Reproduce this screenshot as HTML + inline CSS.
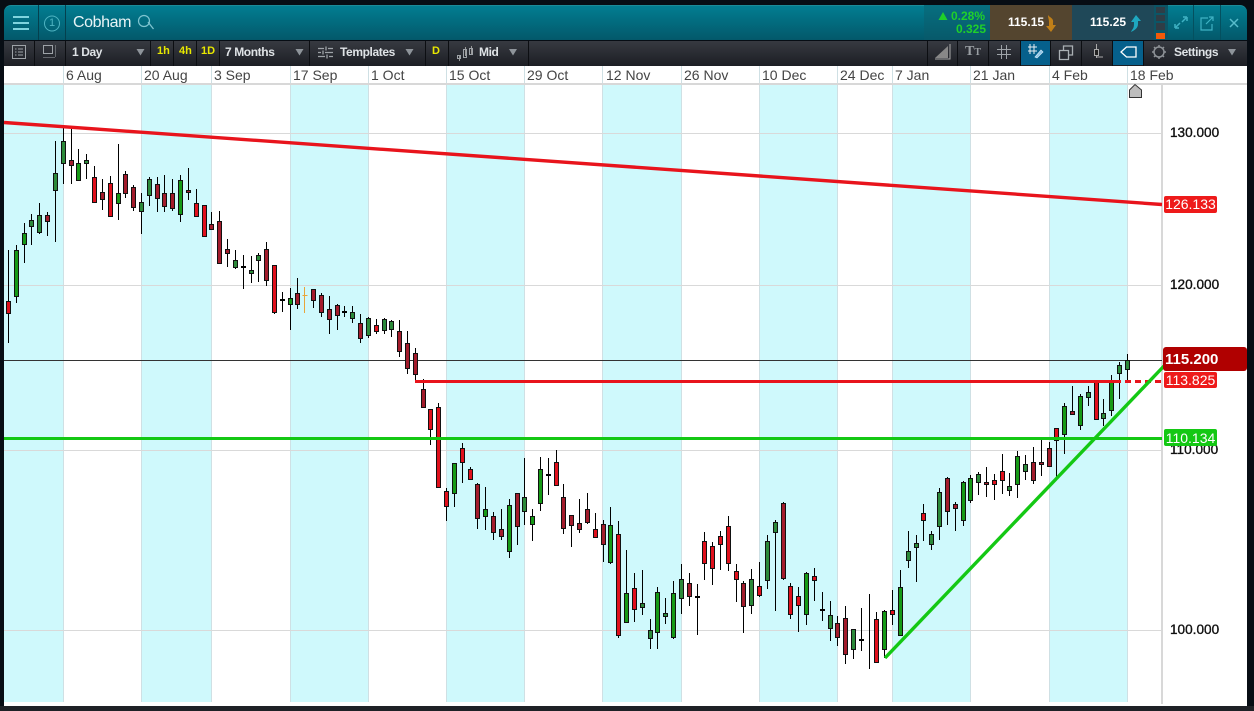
<!DOCTYPE html>
<html><head><meta charset="utf-8"><style>
html,body{margin:0;padding:0;background:#070d14}
body{width:1254px;height:711px;position:relative;overflow:hidden;font-family:"Liberation Sans",Arial,sans-serif}
.a{position:absolute}
.t{position:absolute;white-space:nowrap;line-height:1}
#hdr{left:4px;top:5px;width:1243px;height:35px;background:linear-gradient(#027d91,#03586a);border-radius:7px 7px 0 0;border-top:1px solid #1c8b98;box-sizing:border-box}
#bar{left:4px;top:41px;width:1243px;height:25px;background:linear-gradient(#373a41,#1c1e24)}
.s{position:absolute;width:1px;background:#0c0e12}
.b{color:#dfe3e6;font-size:12px;font-weight:bold;top:46px;letter-spacing:-.4px}
.y{color:#e8e800;font-size:11px;font-weight:bold;top:46px}
.d{color:#444;font-size:14px;top:68px}
.p{color:#111;font-size:13.6px;left:1170px;-webkit-text-stroke:.35px #111}
.l{position:absolute;color:#fff;font-size:14px;text-align:center;border-radius:2px}
svg{position:absolute;left:0;top:0}
</style></head><body>
<div class="a" style="left:4px;top:66px;width:1243px;height:640px;background:#fff"></div>
<div class="a" id="hdr"></div>
<div class="a" id="bar"></div>

<!-- header cells -->
<div class="a" style="left:924px;top:5px;width:66px;height:35px;background:linear-gradient(#076f80,#07596a)"></div>
<div class="a" style="left:990px;top:5px;width:82px;height:35px;background:#54452f"></div>
<div class="a" style="left:1072px;top:5px;width:82px;height:35px;background:#1f4858"></div>
<div class="a" style="left:1154px;top:5px;width:14px;height:35px;background:#0c5566"></div>
<div class="a" style="left:1156px;top:7px;width:9px;height:6px;background:#2f3d46"></div>
<div class="a" style="left:1156px;top:15px;width:9px;height:6px;background:#2f3d46"></div>
<div class="a" style="left:1156px;top:23px;width:9px;height:7px;background:#2f3d46"></div>
<div class="a" style="left:1156px;top:33px;width:9px;height:6px;background:#f25a0a"></div>
<div class="s" style="left:38px;top:5px;height:35px;background:#04404e"></div>
<div class="s" style="left:65px;top:5px;height:35px;background:#04404e"></div>
<div class="s" style="left:1193px;top:5px;height:35px;background:#04505f"></div>
<div class="s" style="left:1220px;top:5px;height:35px;background:#04505f"></div>

<div class="t" style="left:49px;top:18px;color:#4fb4c2;font-size:11px">1</div>
<div class="t" style="left:73px;top:15px;color:#e8f4f6;font-size:16px;letter-spacing:-.4px">Cobham</div>
<div class="t" style="left:951px;top:10px;color:#1fd02a;font-size:12px;font-weight:bold">0.28%</div>
<div class="t" style="left:956px;top:23px;color:#1fd02a;font-size:12px;font-weight:bold">0.325</div>
<div class="t" style="left:1008px;top:16px;color:#fff;font-size:12px;font-weight:bold">115.15</div>
<div class="t" style="left:1090px;top:16px;color:#fff;font-size:12px;font-weight:bold">115.25</div>

<!-- toolbar separators -->
<div class="s" style="left:34px;top:41px;height:25px"></div>
<div class="s" style="left:65px;top:41px;height:25px"></div>
<div class="s" style="left:150px;top:41px;height:25px"></div>
<div class="s" style="left:173px;top:41px;height:25px"></div>
<div class="s" style="left:196px;top:41px;height:25px"></div>
<div class="s" style="left:219px;top:41px;height:25px"></div>
<div class="s" style="left:309px;top:41px;height:25px"></div>
<div class="s" style="left:425px;top:41px;height:25px"></div>
<div class="s" style="left:448px;top:41px;height:25px"></div>
<div class="s" style="left:528px;top:41px;height:25px"></div>
<div class="s" style="left:927px;top:41px;height:25px"></div>
<div class="s" style="left:957px;top:41px;height:25px"></div>
<div class="s" style="left:988px;top:41px;height:25px"></div>
<div class="s" style="left:1020px;top:41px;height:25px"></div>
<div class="s" style="left:1050px;top:41px;height:25px"></div>
<div class="s" style="left:1081px;top:41px;height:25px"></div>
<div class="s" style="left:1112px;top:41px;height:25px"></div>
<div class="s" style="left:1143px;top:41px;height:25px"></div>
<div class="a" style="left:1021px;top:41px;width:29px;height:24px;background:#06608c"></div>
<div class="a" style="left:1113px;top:41px;width:30px;height:24px;background:#06608c"></div>

<div class="t b" style="left:72px">1 Day</div>
<div class="t y" style="left:157px">1h</div>
<div class="t y" style="left:179px">4h</div>
<div class="t y" style="left:201px">1D</div>
<div class="t b" style="left:225px">7 Months</div>
<div class="t b" style="left:340px">Templates</div>
<div class="t y" style="left:432px">D</div>
<div class="t b" style="left:479px">Mid</div>
<div class="t b" style="left:1174px">Settings</div>
<div class="t" style="left:965px;top:45px;color:#9a9fa3;font-size:14px;font-family:'Liberation Serif',serif;font-weight:bold">T<span style="font-size:10px">T</span></div>

<!-- chart backgrounds -->
<svg width="1254" height="711" viewBox="0 0 1254 711">
<g fill="#cff9fc">
<rect x="4" y="85" width="59" height="617"/><rect x="142" y="85" width="69" height="617"/><rect x="291" y="85" width="77" height="617"/><rect x="447" y="85" width="77" height="617"/><rect x="603" y="85" width="78" height="617"/><rect x="759" y="85" width="78" height="617"/><rect x="892" y="85" width="78" height="617"/><rect x="1049" y="85" width="78" height="617"/>
</g>
<path d="M63.5 66V702M141.5 66V702M211.5 66V702M290.5 66V702M368.5 66V702M446.5 66V702M524.5 66V702M602.5 66V702M681.5 66V702M759.5 66V702M837.5 66V702M892.5 66V702M970.5 66V702M1049.5 66V702M1127.5 66V702" stroke="#cfe0e4" fill="none"/>
<path d="M4 84H1247" stroke="#d8d8d8" stroke-width="2" fill="none"/>
<path d="M4 133.5H1162M4 285.5H1162M4 450.5H1162M4 630.5H1162" stroke="#d9d9d9" fill="none"/>
<path d="M1162 84V704" stroke="#d8d8d8" stroke-width="2" fill="none"/>
<path d="M4 360.5H1162" stroke="#333" fill="none"/>

<!-- wicks -->
<path fill="none" stroke="#000" d="M8.5 250V343M16.5 245V303M24.5 223V263M31.5 214V245M39.5 203V234M47.5 212V236M55.5 141V242M63.5 127V184M71.5 129V184M78.5 149V181M86.5 154V179M94.5 166V203M102.5 179V210M110.5 176V216M118.5 144V220M125.5 171V198M133.5 185V211M141.5 193V234M149.5 177V206M157.5 177V212M164.5 175V212M172.5 179V211M180.5 175V222M188.5 168V200M196.5 189V216M204.5 205V236M211.5 212V229M219.5 211V263M227.5 239V267M235.5 250V269M243.5 255V289M251.5 256V283M258.5 253V282M266.5 242V286M274.5 265V314M282.5 292V312M290.5 288V330M297.5 278V309M313.5 289V308M321.5 293V317M329.5 296V334M337.5 304V330M344.5 306V317M352.5 306V323M360.5 314V343M368.5 317V338M376.5 319V334M384.5 318V334M391.5 320V337M399.5 320V357M407.5 331V374M415.5 348V381M423.5 379V408M430.5 409V445M438.5 403V487M446.5 488V521M454.5 463V507M462.5 443V483M470.5 467V480M477.5 483V529M485.5 487V530M493.5 512V540M501.5 509V540M509.5 499V558M517.5 493V545M524.5 458V525M532.5 509V541M540.5 457V511M548.5 458V495M556.5 450V486M563.5 484V534M571.5 515V547M579.5 499V533M587.5 493V524M595.5 513V537M603.5 520V562M610.5 507V564M618.5 521V638M626.5 550V622M634.5 573V622M642.5 570V615M650.5 619V649M657.5 587V649M665.5 598V624M673.5 581V639M681.5 564V614M689.5 573V606M697.5 584V635M704.5 532V580M712.5 542V585M720.5 531V570M728.5 516V571M736.5 564V602M743.5 581V633M751.5 569V614M759.5 562V597M767.5 535V589M775.5 520V611M783.5 502V580M790.5 583V619M798.5 587V632M806.5 572V625M814.5 568V601M822.5 592V621M830.5 601V641M837.5 616V646M845.5 606V664M853.5 629V659M861.5 608V651M869.5 594V669M876.5 612V662M884.5 610V658M892.5 590V625M900.5 570V635M908.5 531V568M916.5 535V582M923.5 504V541M931.5 531V550M939.5 488V540M947.5 477V525M955.5 502V531M963.5 481V526M970.5 475V503M978.5 472V495M986.5 467V497M994.5 474V500M1002.5 454V494M1009.5 473V496M1017.5 451V498M1025.5 455V480M1033.5 447V484M1041.5 440V476M1049.5 442V467M1056.5 428V477M1064.5 403V454M1072.5 386V414M1080.5 394V430M1088.5 386V406M1096.5 382V419M1103.5 399V426M1111.5 375V416M1119.5 362V399M1127.5 354V383"/>
<path fill="none" stroke="#e8a53a" d="M304.5 287V313M302.5 295.5h5"/>
<!-- dojis -->
<path fill="none" stroke="#000" stroke-width="2" d="M241 267h5M280 300h5M342 312h5M546 475h5M695 597h5M820 610h5M859 640h5"/>

<!-- bodies -->
<path fill="#e0101c" stroke="#111" d="M6.5 301.5h4v12h-4zM92.5 177.5h4v25h-4zM108.5 183.5h4v33h-4zM194.5 203.5h4v13h-4zM202.5 205.5h4v31h-4zM272.5 265.5h4v47h-4zM374.5 325.5h4v6h-4zM428.5 409.5h4v20h-4zM436.5 407.5h4v80h-4zM444.5 491.5h4v15h-4zM460.5 448.5h4v14h-4zM468.5 469.5h4v10h-4zM554.5 462.5h4v23h-4zM593.5 529.5h4v8h-4zM616.5 534.5h4v101h-4zM632.5 588.5h4v21h-4zM702.5 541.5h4v22h-4zM710.5 546.5h4v22h-4zM718.5 536.5h4v8h-4zM726.5 526.5h4v37h-4zM734.5 571.5h4v8h-4zM757.5 586.5h4v9h-4zM788.5 586.5h4v28h-4zM796.5 596.5h4v9h-4zM812.5 576.5h4v4h-4zM874.5 619.5h4v43h-4zM890.5 610.5h4v4h-4zM921.5 513.5h4v7h-4zM992.5 480.5h4v4h-4zM1000.5 471.5h4v9h-4zM1054.5 428.5h4v12h-4zM1094.5 382.5h4v37h-4z"/>
<path fill="#a31c2c" stroke="#111" d="M45.5 215.5h4v6h-4zM69.5 160.5h4v5h-4zM100.5 192.5h4v7h-4zM123.5 174.5h4v19h-4zM131.5 187.5h4v20h-4zM155.5 184.5h4v14h-4zM162.5 193.5h4v13h-4zM170.5 193.5h4v15h-4zM186.5 190.5h4v2h-4zM209.5 224.5h4v5h-4zM217.5 221.5h4v42h-4zM225.5 249.5h4v4h-4zM264.5 249.5h4v31h-4zM295.5 293.5h4v11h-4zM311.5 289.5h4v11h-4zM319.5 295.5h4v17h-4zM327.5 309.5h4v10h-4zM335.5 305.5h4v10h-4zM358.5 323.5h4v15h-4zM397.5 331.5h4v20h-4zM405.5 343.5h4v25h-4zM413.5 353.5h4v21h-4zM421.5 389.5h4v18h-4zM475.5 484.5h4v34h-4zM491.5 516.5h4v16h-4zM499.5 529.5h4v7h-4zM515.5 493.5h4v33h-4zM561.5 497.5h4v31h-4zM569.5 515.5h4v10h-4zM577.5 523.5h4v6h-4zM585.5 509.5h4v13h-4zM601.5 524.5h4v20h-4zM687.5 583.5h4v13h-4zM741.5 583.5h4v23h-4zM781.5 503.5h4v75h-4zM835.5 623.5h4v14h-4zM843.5 618.5h4v36h-4zM945.5 478.5h4v33h-4zM953.5 504.5h4v4h-4zM984.5 482.5h4v2h-4zM1031.5 462.5h4v18h-4zM1039.5 462.5h4v2h-4zM1047.5 448.5h4v18h-4zM1070.5 411.5h4v3h-4z"/>
<path fill="#169a16" stroke="#111" d="M14.5 250.5h4v46h-4zM22.5 233.5h4v11h-4zM76.5 163.5h4v17h-4zM116.5 193.5h4v10h-4zM178.5 180.5h4v34h-4zM288.5 298.5h4v6h-4zM452.5 463.5h4v30h-4zM483.5 509.5h4v7h-4zM507.5 505.5h4v46h-4zM530.5 516.5h4v8h-4zM538.5 469.5h4v34h-4zM608.5 525.5h4v37h-4zM624.5 593.5h4v29h-4zM655.5 592.5h4v40h-4zM671.5 593.5h4v44h-4zM804.5 573.5h4v41h-4zM882.5 611.5h4v38h-4zM898.5 587.5h4v48h-4zM961.5 482.5h4v38h-4zM968.5 478.5h4v22h-4zM1015.5 456.5h4v28h-4zM1062.5 406.5h4v28h-4zM1078.5 396.5h4v29h-4zM1109.5 381.5h4v29h-4z"/>
<path fill="#2c8a3a" stroke="#111" d="M29.5 220.5h4v6h-4zM37.5 215.5h4v17h-4zM53.5 173.5h4v17h-4zM61.5 141.5h4v22h-4zM84.5 160.5h4v3h-4zM139.5 202.5h4v9h-4zM147.5 179.5h4v16h-4zM233.5 260.5h4v7h-4zM249.5 270.5h4v3h-4zM256.5 255.5h4v5h-4zM350.5 312.5h4v6h-4zM366.5 318.5h4v17h-4zM382.5 319.5h4v11h-4zM389.5 321.5h4v8h-4zM522.5 497.5h4v14h-4zM640.5 603.5h4v4h-4zM648.5 630.5h4v8h-4zM663.5 613.5h4v3h-4zM679.5 579.5h4v19h-4zM749.5 579.5h4v26h-4zM765.5 541.5h4v39h-4zM773.5 522.5h4v10h-4zM828.5 615.5h4v13h-4zM851.5 629.5h4v20h-4zM906.5 551.5h4v9h-4zM914.5 543.5h4v4h-4zM929.5 534.5h4v10h-4zM937.5 492.5h4v34h-4zM976.5 474.5h4v8h-4zM1007.5 486.5h4v4h-4zM1023.5 464.5h4v7h-4zM1086.5 392.5h4v5h-4zM1101.5 413.5h4v5h-4zM1117.5 365.5h4v8h-4zM1125.5 360.5h4v9h-4z"/>

<!-- trend lines -->
<path d="M4 122.500L1162 204.500" stroke="#e8141c" stroke-width="3.400" fill="none"/>
<path d="M415 381.5H1115" stroke="#e8141c" stroke-width="3" fill="none"/>
<path d="M1115 381.5H1162" stroke="#e8141c" stroke-width="3" stroke-dasharray="6 4" fill="none"/>
<path d="M4 438.5H1162" stroke="#14c814" stroke-width="3" fill="none"/>
<path d="M885 658L1164 366" stroke="#14c814" stroke-width="3.400" fill="none"/>
<path d="M1129.5 97.5V90L1135 84.5L1141.5 90V97.5Z" fill="#bdbdbd" stroke="#333"/>

<!-- header icons -->
<path d="M13 17H29M13 23H29M13 29H29" stroke="#7ed4de" stroke-width="2" fill="none"/>
<circle cx="52" cy="23.500" r="7.500" fill="none" stroke="#4fb4c2"/>
<path d="M148 22l5.500 7" stroke="#7ec4d0" stroke-width="1.300" fill="none"/><circle cx="144" cy="21" r="5.500" fill="none" stroke="#7ec4d0" stroke-width="1.200"/>
<path d="M938.500 20l4.500-8 4.500 8z" fill="#1fd02a"/>
<path d="M1048 15c2 3 6 3 5 8v2h3l-5 7-5-6h3v-4c0-3-1-4-1-7z" fill="#c07f18"/>
<path d="M1131 32c1-3 3-3 3-8v-2h-3l5-7 5 6h-3v3c0 4-3 6-7 8z" fill="#1ea8c0"/>
<path d="M1175 28v-4M1175 28h4M1176 27l4-4M1187 17v4M1187 17h-4M1186 18l-4 4" stroke="#3fb2c4" stroke-width="1.500" fill="none"/>
<path d="M1212 24v6h-11v-12h7M1206 24l7-7M1209 17h4v4" stroke="#3fb2c4" stroke-width="1.200" fill="none"/>
<path d="M1230 19l8 8M1238 19l-8 8" stroke="#58bccb" stroke-width="1.500" fill="none"/>

<!-- toolbar icons -->
<g fill="none" stroke="#9ea3a8">
<rect x="12.500" y="45.500" width="13" height="13"/><path d="M15 49h1.500M18 49h5M15 52h1.500M18 52h5M15 55h1.500M18 55h5"/>
<rect x="43.500" y="45.500" width="9" height="8"/><path d="M43.500 57.500h12M55.500 45.500v12" stroke-dasharray="1 1"/>
<path d="M318 48.500h6M328 48.500h5M318 52.500h3M325 52.500h8M318 56.500h7M329 56.500h4M326 46.500v4M323 50.500v4M327 54.500v4" stroke-width="1.300"/>
<path d="M459.500 55v6M465.500 47v9M471.500 46v9" stroke="#999"/><rect x="457.500" y="55.500" width="3" height="3"/><rect x="463.500" y="49.500" width="3" height="8"/><rect x="469.500" y="48.500" width="3" height="6"/>
<path d="M950 44v15h-15" stroke="#aaa"/><path d="M935 58l13-12v12z" fill="#888" stroke="none"/>
<path d="M1001.500 45v14M1006.500 45v14M997 49.500h14M997 54.500h14"/>
<path d="M1030 44v10M1034 44v10M1028 47h9M1028 51h9" stroke="#e8eef2"/><path d="M1035 57l6-7 2 2-6 6z" fill="#8fc6e8" stroke="#cfe6f4" stroke-width=".7"/>
<path d="M1059.500 50.500h9v9h-9zM1063.500 50v-4h9v9h-4" stroke="#aab0b4" stroke-width="1.300"/>
<path d="M1096.500 44v14M1097 57h6" stroke="#aaa"/><rect x="1094.500" y="49.500" width="4" height="6" fill="#222" stroke="#aaa"/>
<path d="M1121 52l5.500-5h9.500v10h-9.500z" stroke="#fff" stroke-width="1.300"/>
<circle cx="1159" cy="52" r="5" stroke="#8e9297" stroke-width="1.500"/><path d="M1159 45v2M1159 57v2M1152 52h2M1164 52h2M1154 47l1.500 1.500M1164 47l-1.500 1.500M1154 57l1.500-1.500M1164 57l-1.500-1.500" stroke="#8e9297" stroke-width="1.500"/>
</g>
<g fill="#8e949a">
<path d="M136.500 49h8l-4 6.500zM295.500 49h8l-4 6.500zM405.500 49h8l-4 6.500zM509 49h8l-4 6.500zM1228 49h8l-4 6.500z"/>
</g>
</svg>

<!-- date labels -->
<div class="t d" style="left:66px">6 Aug</div>
<div class="t d" style="left:144px">20 Aug</div>
<div class="t d" style="left:214px">3 Sep</div>
<div class="t d" style="left:293px">17 Sep</div>
<div class="t d" style="left:371px">1 Oct</div>
<div class="t d" style="left:449px">15 Oct</div>
<div class="t d" style="left:527px">29 Oct</div>
<div class="t d" style="left:606px">12 Nov</div>
<div class="t d" style="left:684px">26 Nov</div>
<div class="t d" style="left:762px">10 Dec</div>
<div class="t d" style="left:840px">24 Dec</div>
<div class="t d" style="left:895px">7 Jan</div>
<div class="t d" style="left:973px">21 Jan</div>
<div class="t d" style="left:1052px">4 Feb</div>
<div class="t d" style="left:1130px">18 Feb</div>

<!-- price labels -->
<div class="t p" style="top:126px">130.000</div>
<div class="t p" style="top:278px">120.000</div>
<div class="t p" style="top:443px">110.000</div>
<div class="t p" style="top:623px">100.000</div>
<div class="l" style="left:1164px;top:196px;width:53px;height:17px;line-height:17px;background:#ee1a1a">126.133</div>
<div class="a" style="left:1163px;top:347px;width:84px;height:24px;background:#b00000;border-radius:3px"></div>
<div class="t" style="left:1165px;top:352px;color:#fff;font-size:15px;font-weight:bold">115.200</div>
<div class="l" style="left:1164px;top:372px;width:53px;height:16px;line-height:17px;background:#ee1a1a">113.825</div>
<div class="l" style="left:1164px;top:429px;width:53px;height:17px;line-height:18px;background:#14c814">110.134</div>
<div class="a" style="left:0;top:706px;width:1254px;height:5px;background:#1e2126"></div>
</body></html>
